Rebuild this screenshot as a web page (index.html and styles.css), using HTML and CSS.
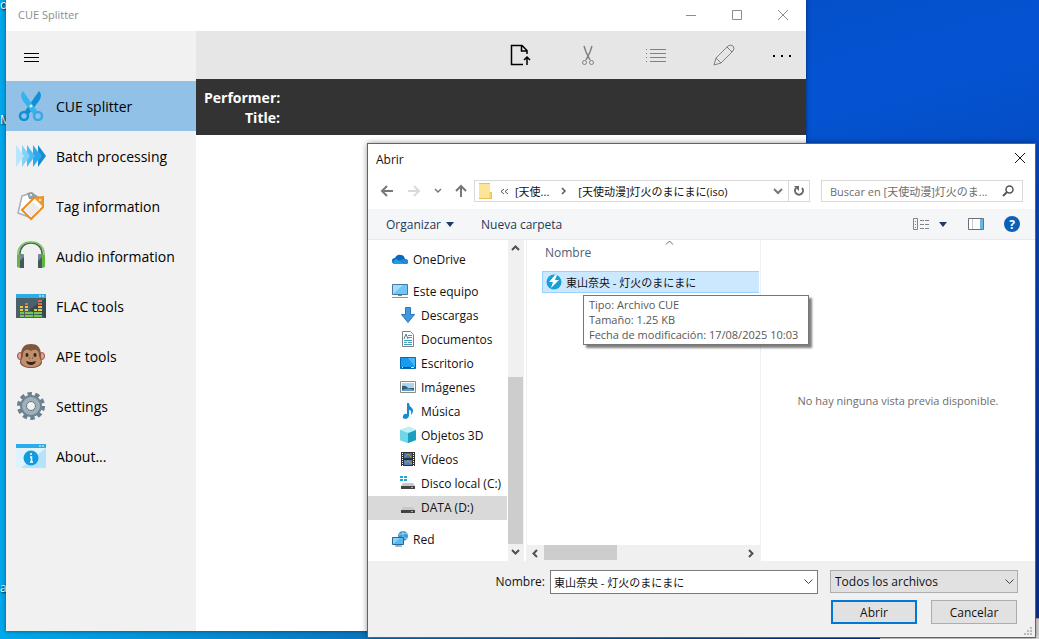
FILE: index.html
```
<!DOCTYPE html>
<html lang="es">
<head>
    <meta charset="UTF-8">
    <meta name="viewport" content="width=device-width, initial-scale=1.0">
    <title>CUE Splitter</title>
    <link rel="stylesheet" href="styles.css">
</head>
<body>
<div class="desktop">
    <span class="desktop-label label-top">o</span>
    <span class="desktop-label label-middle">M</span>
    <span class="desktop-label label-bottom">a</span>
    <div class="desktop-panel"></div>

    <!-- Ventana principal -->
    <main class="app">
        <header class="app-title">
            <span class="app-name">CUE Splitter</span>
            <button class="win-btn" aria-label="Minimizar"><svg width="12" height="12"><path d="M1 5.500h10"/></svg></button>
            <button class="win-btn" aria-label="Maximizar"><svg width="12" height="12"><path d="M1.500.5h9v9h-9z"/></svg></button>
            <button class="win-btn" aria-label="Cerrar"><svg width="12" height="12"><path d="M1 0l10 10M11 0L1 10"/></svg></button>
        </header>
        <div class="app-body">
            <nav class="sidebar">
                <button class="hamburger" aria-label="Menu"><svg width="16" height="12"><path d="M0 1.500h15M0 5.500h15M0 9.500h15" stroke="#000"/></svg></button>
                <a class="nav-item active" href="#">
                    <svg class="nav-icon" viewBox="0 0 30 30">
                        <path d="M23 0c3 3 2 7 0 10L13 23l-4-3z" fill="#0f8fd6"/>
                        <path d="M7 0c-3 3-2 7 0 10l10 13 4-3z" fill="#35b3ea"/>
                        <circle cx="15" cy="15" r="1.500" fill="#cfefff"/>
                        <circle cx="8" cy="25" r="4" fill="none" stroke="#0f8fd6" stroke-width="2.500"/>
                        <circle cx="22" cy="25" r="4" fill="none" stroke="#35a9e6" stroke-width="2.500"/>
                    </svg>
                    <span>CUE splitter</span>
                </a>
                <a class="nav-item" href="#">
                    <svg class="nav-icon" viewBox="0 0 30 30">
                        <path d="M22 4l8 11-8 11z" fill="#168bd2"/>
                        <path d="M22 9l4 6-4 6z" fill="#27a3e6"/>
                        <path d="M17 4l8 11-8 11z" fill="#2ba6ea"/>
                        <path d="M11 4l8 11-8 11z" fill="#4dbbf3"/>
                        <path d="M6 4l8 11-8 11z" fill="#84d1f8"/>
                        <path d="M0 4l8 11-8 11z" fill="#bce6fb"/>
                    </svg>
                    <span>Batch processing</span>
                </a>
                <a class="nav-item" href="#">
                    <svg class="nav-icon" viewBox="0 0 30 30">
                        <path d="M6 5l9-3 7 4-9 20-11-4z" fill="#fff" stroke="#a5afb6" stroke-width="1.500"/>
                        <path d="M11 2l5-1 5 4-1 4-7-1z" fill="#93a0a8"/>
                        <circle cx="15" cy="4" r="1" fill="#fff"/>
                        <path d="M6 19L18 7l9-1v10L15 28z" fill="#fff" stroke="#ef8b1d" stroke-width="2"/>
                        <path d="M18 7l9-1v10z" fill="#f39a2e"/>
                        <path d="M9 19l8-8 7 7-9 8z" fill="#ececec"/>
                        <circle cx="24" cy="9" r="1" fill="#fff"/>
                    </svg>
                    <span>Tag information</span>
                </a>
                <a class="nav-item" href="#">
                    <svg class="nav-icon" viewBox="0 0 30 30">
                        <path d="M4 15C3 6 9 2 15 2s12 4 11 13" fill="none" stroke="#41604f" stroke-width="1.500"/>
                        <path d="M2 15C1 5 8 1 15 1s14 4 13 14" fill="none" stroke="#7fc05e" stroke-width="1.500"/>
                        <path d="M1 14l3-1v14l-3-1zM29 14l-3-1v14l3-1z" fill="#65b640"/>
                        <rect x="4" y="13" width="4" height="14" rx="1" fill="#718893"/>
                        <rect x="22" y="13" width="4" height="14" rx="1" fill="#718893"/>
                        <path d="M4 20l4-4v11H4zM22 20l4-4v11h-4z" fill="#43585f"/>
                    </svg>
                    <span>Audio information</span>
                </a>
                <a class="nav-item" href="#">
                    <svg class="nav-icon" viewBox="0 0 30 30">
                        <path d="M0 3h30v24H0z" fill="#4b6069"/>
                        <path d="M30 7v20L13 19z" fill="#364a52"/>
                        <path d="M0 3h30v4H0z" fill="#2badea"/>
                        <path d="M23 5h2M26 5h2" stroke="#fff"/>
                        <path d="M4 22h4M4 25h4M9 22h4M9 25h4M13 22h4M13 25h4M18 22h4M18 25h4M22 22h4M22 25h4" stroke="#74c950" stroke-width="2"/>
                        <path d="M4 16h3M4 19h3M9 16h3M9 19h3M18 19h3M22 16h4M22 19h4" stroke="#e7c844" stroke-width="2"/>
                        <path d="M9 13h3M22 10h4M22 13h4" stroke="#eb6647" stroke-width="2"/>
                    </svg>
                    <span>FLAC tools</span>
                </a>
                <a class="nav-item" href="#">
                    <svg class="nav-icon" viewBox="0 0 30 30">
                        <ellipse cx="4" cy="15" rx="2.500" ry="3.500" fill="#ef9b9e" stroke="#8b5b42"/>
                        <ellipse cx="26" cy="15" rx="2.500" ry="3.500" fill="#ef9b9e" stroke="#8b5b42"/>
                        <path d="M5 14C5 6 9 3 15 3s10 3 10 11c0 4 1 5 1 7 0 4-6 6-11 6S4 25 4 21c0-2 1-3 1-7z" fill="#80563f"/>
                        <path d="M7 14c0-6 5-6 8-4 3-2 8-2 8 4 0 3 2 4 2 6 0 4-5 6-10 6S5 24 5 20c0-2 2-3 2-6z" fill="#c1906b"/>
                        <ellipse cx="11" cy="14" rx="1.500" ry="2" fill="#30231e"/>
                        <ellipse cx="19" cy="14" rx="1.500" ry="2" fill="#30231e"/>
                        <path d="M13 17h1M16 17h1" stroke="#614234"/>
                        <path d="M10 20q5 2 10 0-1 4-5 4t-5-4z" fill="#35241e"/>
                    </svg>
                    <span>APE tools</span>
                </a>
                <a class="nav-item" href="#">
                    <svg class="nav-icon" viewBox="0 0 30 30">
                        <circle cx="15" cy="15" r="12" fill="none" stroke="#6a808c" stroke-width="4" stroke-dasharray="4.300 3.239"/>
                        <circle cx="15" cy="15" r="8" fill="none" stroke="#6f8692" stroke-width="6"/>
                        <circle cx="15" cy="15" r="7" fill="none" stroke="#9fb0b9" stroke-width="4"/>
                        <circle cx="15" cy="15" r="4.500" fill="#f1f1f1" stroke="#5c7480"/>
                    </svg>
                    <span>Settings</span>
                </a>
                <a class="nav-item" href="#">
                    <svg class="nav-icon" viewBox="0 0 30 30">
                        <path d="M0 3h30v24H0z" fill="#dff3fd"/>
                        <path d="M30 7v20H5z" fill="#b4e4fa"/>
                        <path d="M0 3h30v4H0z" fill="#2badea"/>
                        <path d="M23 5h2M26 5h2" stroke="#fff"/>
                        <circle cx="15" cy="17" r="7.500" fill="#149bdd"/>
                        <circle cx="15" cy="13" r="1" fill="#fff"/>
                        <path d="M14 16h1.500v5M14 21h3" fill="none" stroke="#fff" stroke-width="1.500"/>
                    </svg>
                    <span>About...</span>
                </a>
            </nav>
            <section class="content">
                <div class="toolbar">
                    <button class="tool" aria-label="Abrir archivo"><svg width="22" height="22"><path d="M14 20.500H2.500v-19H13l5 5V10M12.500 2v5H18" stroke="#000" stroke-width="1.500"/><path d="M18 21v-7M15 16l3-3 3 3" stroke="#000" stroke-width="1.500"/></svg></button>
                    <button class="tool" aria-label="Cortar"><svg width="22" height="22"><path d="M7 2l2 6 4 8M15 2l-2 6-4 8" stroke-width="1.500"/><circle cx="7.500" cy="18.500" r="2"/><circle cx="14.500" cy="18.500" r="2"/></svg></button>
                    <button class="tool" aria-label="Lista"><svg width="22" height="22"><path d="M5 5.500h16M5 9.500h16M5 13.500h16M5 17.500h16M1 5.500h1M1 9.500h1M1 13.500h1M1 17.500h1"/></svg></button>
                    <button class="tool" aria-label="Editar"><svg width="22" height="22"><path d="M1 21l2-7L15 2q3-2 5 0t0 5L8 19zM3 14l5 5M14 3l5 5"/></svg></button>
                    <button class="tool more" aria-label="Más"><svg width="20" height="2"><path d="M1 0h2v2H1zM9 0h2v2H9zM17 0h2v2h-2z" fill="#000" stroke="none"/></svg></button>
                </div>
                <dl class="disc-info">
                    <dt>Performer:</dt><dd></dd>
                    <dt>Title:</dt><dd></dd>
                </dl>
            </section>
        </div>
    </main>

    <!-- Cuadro de abrir archivo -->
    <section class="dialog" role="dialog" aria-labelledby="dialogTitle">
        <header class="dialog-title">
            <span id="dialogTitle">Abrir</span>
            <button class="close" aria-label="Cerrar"><svg width="12" height="12"><path d="M1 0l10 10M11 0L1 10" stroke="#111"/></svg></button>
        </header>

        <div class="address-row">
            <div class="history">
                <button aria-label="Atrás"><svg width="14" height="12"><path d="M13 6H2M7 1L2 6l5 5" stroke="#777" stroke-width="2"/></svg></button>
                <button aria-label="Adelante"><svg width="14" height="12"><path d="M1 6h11M7 1l5 5-5 5" stroke="#dadada" stroke-width="2"/></svg></button>
                <button class="recent" aria-label="Recientes"><svg width="8" height="6"><path d="M1 1l3 3 3-3" stroke="#777" stroke-width="1.500"/></svg></button>
                <button aria-label="Subir"><svg width="12" height="14"><path d="M6 13V2M1 7l5-5 5 5" stroke="#777" stroke-width="2"/></svg></button>
            </div>
            <div class="path">
                <svg width="14" height="16"><path d="M1 0h11v9h2v7H1z" fill="#e9c258"/><path d="M1 1h11v14H1z" fill="#fce596"/><path d="M11 10h2v5h-2z" fill="#f9d76f"/></svg>
                <button class="crumb-sep" aria-label="Anteriores"><svg width="9" height="7"><path d="M4 1L1 3.500 4 6M8 1L5 3.500 8 6" stroke="#555"/></svg></button>
                <button class="crumb">[天使...</button>
                <svg class="crumb-arrow" width="5" height="8"><path d="M1 1l3 3-3 3" stroke="#555" stroke-width="1.500"/></svg>
                <button class="crumb current">[天使动漫]灯火のまにまに(iso)</button>
                <button class="path-drop" aria-label="Ubicaciones"><svg width="10" height="7"><path d="M1 1l4 4 4-4" stroke="#777" stroke-width="2"/></svg></button>
                <button class="refresh" aria-label="Actualizar"><svg width="12" height="12"><path d="M9 3a4 4 0 1 1-6 0" stroke="#666" stroke-width="2"/><path d="M1 1h5v5z" fill="#666"/></svg></button>
            </div>
            <div class="search">
                <input type="text" aria-label="Buscar" placeholder="Buscar en [天使动漫]灯火のま...">
                <svg width="12" height="12"><circle cx="7.500" cy="4.500" r="3.500" stroke="#555" stroke-width="1.500"/><path d="M5 7l-4 4" stroke="#555" stroke-width="2"/></svg>
            </div>
        </div>

        <div class="command-bar">
            <button>Organizar <svg width="8" height="5"><path d="M0 0h8L4 5z" fill="#1f3a67"/></svg></button>
            <button>Nueva carpeta</button>
            <div class="view-tools">
                <button aria-label="Vista"><svg width="17" height="13"><path d="M.5.5h4v11h-4zM7 2.500h4M12 2.500h4M7 6.500h4M12 6.500h4M7 10.500h4M12 10.500h4M2 3.500h1M2 6.500h1M2 9.500h1" stroke="#7d858c"/></svg></button>
                <button class="view-drop" aria-label="Más vistas"><svg width="8" height="5"><path d="M0 0h8L4 5z" fill="#1f3a67"/></svg></button>
                <button class="preview-btn" aria-label="Panel de vista previa"><svg width="16" height="12"><path d="M.5.5h15v11H.5z" fill="#fff" stroke="#66717c"/><path d="M4.500 1v10" stroke="#c7cbd0"/><path d="M12 1h3v10h-3z" fill="#69b5e5"/></svg></button>
                <button class="help">?</button>
            </div>
        </div>

        <div class="browser">
            <ul class="tree">
                <li class="top-level"><svg width="16" height="16"><path d="M3 13a3 3 0 0 1 0-6q2-4 6-3 3 0 4 4 3 0 3 3 0 2-2 2z" fill="#0a68bd"/><path d="M2 13q-2-3 2-5l10 5z" fill="#1c9ee8"/><path d="M7 9l6-1q3 0 3 3 0 2-2 2z" fill="#2389da"/></svg>OneDrive</li>
                <li class="top-level spaced"><svg width="16" height="16"><path d="M.5 1.500h15v10H.5z" fill="#70c5f7" stroke="#45799d"/><path d="M1 11V2h10z" fill="#a6dcfa"/><path d="M6 12h4v1H6z" fill="#748795"/><path d="M0 14.500h16" stroke="#8196ab"/></svg>Este equipo</li>
                <li><svg width="16" height="16"><path d="M5.500.5h5v7h4L8 15.500 1.500 7.500h4z" fill="#3f98df" stroke="#2976b9"/></svg>Descargas</li>
                <li><svg width="16" height="16"><path d="M2.500.5h8l3 3v12h-11z" fill="#fff" stroke="#828282"/><path d="M8 4.500h4M8 6.500h4M4 9.500h8M4 11.500h3M8 11.500h4M4 13.500h8" stroke="#409dbd"/><path d="M4 8l2-5 2 5" stroke="#39809c"/></svg>Documentos</li>
                <li><svg width="16" height="16"><path d="M.5 2.500h15v11H.5z" fill="#159cf1" stroke="#0869ad"/><path d="M8 3h7v9z" fill="#4ab6f8"/><path d="M1 12.500h14" stroke="#064d8a"/><path d="M2 12.500h1M11 12.500h3" stroke="#e7f6ff"/></svg>Escritorio</li>
                <li><svg width="16" height="16"><path d="M.5 2.500h15v11H.5z" fill="#fff" stroke="#8a8a8a"/><path d="M2 4h12v8H2z" fill="#a9d5ef"/><path d="M2 7q4-1 6 2h6v3H2z" fill="#365e70"/><path d="M2 11q7-3 12 0v1H2z" fill="#619ecb"/></svg>Imágenes</li>
                <li><svg width="16" height="16"><path d="M7 0h2q0 3 3 5 2 2 0 6l-1 1q1-5-2-5v6q-1 3-4 3-3-1-2-3 1-3 4-2z" fill="#168ccf"/></svg>Música</li>
                <li><svg width="16" height="16"><path d="M0 3l9-3 7 3v10l-8 3-8-3z" fill="#52cbe0"/><path d="M0 3l8 3v10l-8-3z" fill="#6fd6e6"/><path d="M8 6l8-3v10l-8 3z" fill="#1f9fc0"/><path d="M0 3l9-3 7 3-8 3z" fill="#b9f2f6"/></svg>Objetos 3D</li>
                <li><svg width="16" height="16"><path d="M1 1h14v14H1z" fill="#303030"/><path d="M4 2h8v5H4z" fill="#4273a7"/><path d="M4 9h8v5H4z" fill="#547eb3"/><path d="M5 6l3-3 3 3M5 12l3-2 4 3" stroke="#b3a544"/><path d="M2.500 2v13M13.500 2v13" stroke="#fff" stroke-dasharray="1 1"/></svg>Vídeos</li>
                <li><svg width="16" height="16"><path d="M0 1h3v2H0zM4 1h3v2H4zM0 4h3v2H0zM4 4h3v2H4z" fill="#20a8db"/><path d="M3 8h10l2 3H1z" fill="#c5c8c9"/><path d="M1 11h14v3H1z" fill="#444"/><path d="M11 12h2v1h-2z" fill="#3af169"/></svg>Disco local (C:)</li>
                <li class="selected"><svg width="16" height="16"><path d="M3 8h10l2 3H1z" fill="#c5c8c9"/><path d="M1 11h14v3H1z" fill="#444"/><path d="M11 12h2v1h-2z" fill="#3af169"/></svg>DATA (D:)</li>
                <li class="top-level spaced"><svg width="16" height="16"><circle cx="11" cy="5" r="5" fill="#3c98ce"/><path d="M7 4q4-3 8-1M7 7h8M11 0v10" stroke="#9bd4ea"/><path d="M.5 6.500h11v7H.5z" fill="#59baf2" stroke="#1f6999"/><path d="M1 13V7h7z" fill="#8bd4fa"/><path d="M3 15h7M6 13v2" stroke="#527a9b"/></svg>Red</li>
            </ul>
            <div class="v-scroll">
                <button aria-label="Arriba"><svg width="9" height="7"><path d="M1 5l3.500-3.500L8 5" stroke="#505050" stroke-width="2"/></svg></button>
                <div class="v-thumb"></div>
                <button aria-label="Abajo"><svg width="9" height="7"><path d="M1 1l3.500 3.500L8 1" stroke="#505050" stroke-width="2"/></svg></button>
            </div>
            <div class="files">
                <button class="column-head"><svg width="9" height="5"><path d="M1 4.500L4.500 1 8 4.500" stroke="#666"/></svg>Nombre</button>
                <button class="file"><svg width="16" height="16"><circle cx="8" cy="8" r="7.500" fill="#179fd7"/><path d="M9 1L3 8h4l-2 6 8-8H9l2-5z" fill="#fff"/></svg>東山奈央 - 灯火のまにまに</button>
                <div class="tooltip" role="tooltip">Tipo: Archivo CUE<br>Tamaño: 1.25 KB<br>Fecha de modificación: 17/08/2025 10:03</div>
                <div class="h-scroll">
                    <button aria-label="Izquierda"><svg width="7" height="9"><path d="M5 1L1.500 4.500 5 8" stroke="#505050" stroke-width="2"/></svg></button>
                    <div class="h-thumb"></div>
                    <button aria-label="Derecha"><svg width="7" height="9"><path d="M1 1l3.500 3.500L1 8" stroke="#505050" stroke-width="2"/></svg></button>
                </div>
            </div>
            <div class="preview">No hay ninguna vista previa disponible.</div>
        </div>

        <footer class="dialog-footer">
            <div class="name-row">
                <label for="fileName">Nombre:</label>
                <div class="combo">
                    <input type="text" id="fileName" value="東山奈央 - 灯火のまにまに">
                    <button aria-label="Nombres recientes"><svg width="9" height="6"><path d="M.5.5l4 4 4-4" stroke="#444"/></svg></button>
                </div>
                <div class="filter">
                    <select aria-label="Tipo de archivo"><option>Todos los archivos</option></select>
                    <svg width="9" height="6"><path d="M.5.5l4 4 4-4" stroke="#444"/></svg>
                </div>
            </div>
            <div class="actions">
                <button class="btn primary">Abrir</button>
                <button class="btn">Cancelar</button>
            </div>
            <svg class="grip" width="8" height="8"><path d="M6 0h2v2H6zM3 3h2v2H3zM6 3h2v2H6zM0 6h2v2H0zM3 6h2v2H3zM6 6h2v2H6z" fill="#b9b9b9"/></svg>
        </footer>
    </section>
</div>
</body>
</html>
```
FILE: styles.css
```
* {
    box-sizing: border-box;
}

body {
    margin: 0;
    font-family: "Open Sans", "Noto Sans CJK JP", sans-serif;
    font-size: 12px;
    color: #111;
}

button, input, select {
    font: inherit;
    color: inherit;
    margin: 0;
    padding: 0;
    border: none;
    border-radius: 0;
    background: none;
}

button {
    display: flex;
    align-items: center;
    justify-content: center;
    white-space: nowrap;
}

svg {
    display: block;
    flex: none;
    fill: none;
}

.desktop {
    position: relative;
    height: 100vh;
    min-height: 600px;
    overflow: hidden;
    background: linear-gradient(to right, #00a8ec 0%, #0b6fb8 40%, #0a3c88 74%, rgba(0, 0, 0, 0) 74%) bottom / 100% 8px no-repeat,
        linear-gradient(to right, #00a8ec 0%, #00a8ec 10%, rgba(0, 0, 0, 0) 10%),
        linear-gradient(165deg, #0448bd 0%, #0454d2 35%, #07349a 90%);
}

.desktop-label {
    position: absolute;
    left: 0;
    color: #fff;
    line-height: 16px;
    text-shadow: 1px 1px 2px #000;
}

.label-top {
    top: -3px;
}

.label-middle {
    top: 112px;
}

.label-bottom {
    top: 580px;
}

.desktop-panel {
    position: absolute;
    right: 0;
    bottom: 0;
    width: 159px;
    height: 21px;
    background-color: #dcdcdc;
    border-top: 1px solid #b79c86;
}

/* Ventana principal */
.app {
    position: absolute;
    top: 0;
    left: 6px;
    right: 233px;
    bottom: 8px;
    display: flex;
    flex-direction: column;
    background-color: #fff;
    box-shadow: 0 0 4px rgba(0, 0, 0, 0.5);
}

.app-title {
    display: flex;
    height: 31px;
    align-items: stretch;
    color: #8c8c8c;
    font-size: 11px;
}

.app-name {
    flex: 1;
    padding-left: 12px;
    line-height: 30px;
}

.win-btn {
    width: 46px;
    stroke: #8c8c8c;
}

.app-body {
    display: flex;
    flex: 1;
}

.sidebar {
    width: 190px;
    background-color: #f1f1f1;
}

.hamburger {
    width: 50px;
    height: 50px;
    padding: 3px 0 0 2px;
}

.nav-item {
    display: flex;
    align-items: center;
    gap: 10px;
    height: 50px;
    padding-left: 10px;
    font-size: 14px;
    color: #000;
    text-decoration: none;
}

.nav-item.active {
    background-color: #91c1e7;
}

.nav-icon {
    width: 30px;
    height: 30px;
}

.content {
    flex: 1;
}

.toolbar {
    display: flex;
    justify-content: flex-end;
    height: 48px;
    background-color: #e6e6e6;
}

.tool {
    width: 68px;
    stroke: #808080;
}

.tool.more {
    width: 48px;
    padding-top: 2px;
}

.disc-info {
    display: grid;
    grid-template-columns: 76px 1fr;
    grid-auto-rows: 20px;
    margin: 0;
    padding: 9px 8px 7px;
    background-color: #333;
    color: #fff;
    font-size: 14px;
    font-weight: bold;
    line-height: 20px;
}

.disc-info dt {
    text-align: right;
}

.disc-info dd {
    margin: 0;
}

/* Cuadro de dialogo */
.dialog {
    position: absolute;
    top: 143px;
    left: 367px;
    right: 3px;
    bottom: 1px;
    display: flex;
    flex-direction: column;
    background-color: #fff;
    border: 1px solid #606468;
    box-shadow: 0 0 6px rgba(0, 0, 0, 0.4);
}

.dialog-title {
    display: flex;
    justify-content: space-between;
    align-items: center;
    height: 30px;
    padding-left: 8px;
}

.close {
    width: 30px;
    height: 30px;
}

.address-row {
    display: flex;
    gap: 11px;
    padding: 6px 12px 7px 12px;
}

.history {
    display: flex;
    align-items: center;
    justify-content: space-between;
    width: 87px;
    margin-right: -4px;
}

.path, .search {
    display: flex;
    align-items: center;
    height: 22px;
    border: 1px solid #d9d9d9;
    font-size: 11px;
}

.path {
    flex: 1;
    padding-left: 3px;
}

.crumb-sep {
    width: 22px;
    margin-left: 1px;
}

.crumb-arrow {
    margin: 0 12px;
}

.path-drop {
    width: 20px;
    height: 20px;
    margin-left: auto;
}

.refresh {
    width: 21px;
    height: 20px;
    border-left: 1px solid #d9d9d9;
}

.search {
    width: 202px;
    padding: 0 8px;
}

.search input {
    flex: 1;
    min-width: 0;
    outline: none;
}

.search input::placeholder {
    color: #6d6d6d;
    opacity: 1;
}

.command-bar {
    display: flex;
    align-items: center;
    gap: 27px;
    height: 31px;
    padding: 0 15px 0 18px;
    background-color: #f5f6f7;
    border-bottom: 1px solid #e8e9ea;
    color: #1e395b;
}

.command-bar button {
    gap: 5px;
}

.view-tools {
    display: flex;
    align-items: center;
    margin-left: auto;
}

.view-drop {
    margin-left: 9px;
}

.preview-btn {
    margin: 0 20px 0 21px;
}

.command-bar .help {
    width: 16px;
    height: 16px;
    border-radius: 50%;
    background-color: #0b62b5;
    color: #fff;
    font-weight: bold;
}

.browser {
    display: flex;
    flex: 1;
    min-height: 0;
}

.tree {
    width: 139px;
    margin: 0;
    padding: 8px 0 0;
    list-style: none;
    overflow: hidden;
}

.tree li {
    display: flex;
    align-items: center;
    gap: 5px;
    height: 24px;
    padding: 0 0 2px 32px;
    white-space: nowrap;
}

.tree .top-level {
    padding-left: 24px;
}

.tree .spaced {
    margin-top: 8px;
}

.tree .selected {
    background-color: #d9d9d9;
}

.v-scroll {
    display: flex;
    flex-direction: column;
    width: 16px;
    margin: 0 2px 0 1px;
    background-color: #f0f0f0;
}

.v-scroll button {
    width: 15px;
    height: 17px;
}

.v-thumb {
    height: 52%;
    width: 15px;
    margin-top: auto;
    background-color: #cdcdcd;
}

.files {
    position: relative;
    display: flex;
    flex-direction: column;
    width: 235px;
    border-left: 1px solid #f0f0f0;
    border-right: 1px solid #f0f0f0;
}

.column-head {
    position: relative;
    justify-content: flex-start;
    height: 25px;
    padding-left: 18px;
    color: #4c607a;
}

.column-head svg {
    position: absolute;
    top: 0;
    left: 138px;
}

.file {
    justify-content: flex-start;
    gap: 4px;
    height: 22px;
    margin: 6px 1px 0 15px;
    padding-left: 3px;
    background-color: #cce8ff;
    border: 1px solid #99d1ff;
    border-right: none;
    font-size: 11px;
}

.tooltip {
    position: absolute;
    z-index: 1;
    top: 55px;
    left: 56px;
    padding: 1px 10px 2px 5px;
    background-color: #fff;
    border: 1px solid #767676;
    box-shadow: 3px 3px 2px rgba(0, 0, 0, 0.5);
    color: #575757;
    font-size: 11px;
    line-height: 15px;
    white-space: nowrap;
}

.h-scroll {
    display: flex;
    height: 16px;
    margin-top: auto;
    background-color: #f0f0f0;
}

.h-scroll button {
    width: 17px;
    height: 16px;
}

.h-thumb {
    width: 73px;
    height: 15px;
    margin-right: auto;
    background-color: #cdcdcd;
}

.preview {
    display: flex;
    flex: 1;
    align-items: center;
    justify-content: center;
    color: #6d6d6d;
    font-size: 11px;
}

.dialog-footer {
    position: relative;
    height: 76px;
    padding: 9px 17px 0 12px;
    background-color: #f0f0f0;
}

.name-row {
    display: flex;
    align-items: flex-start;
}

.name-row label {
    width: 170px;
    padding-right: 5px;
    line-height: 23px;
    text-align: right;
}

.combo {
    display: flex;
    flex: 1;
    height: 24px;
    margin-right: 12px;
    background-color: #fff;
    border: 1px solid #7a7a7a;
    font-size: 11px;
}

.combo input {
    flex: 1;
    min-width: 0;
    padding-left: 3px;
    outline: none;
}

.combo button {
    width: 17px;
}

.filter {
    position: relative;
    width: 188px;
}

.filter select {
    width: 100%;
    height: 23px;
    padding: 0 20px 0 4px;
    appearance: none;
    background-color: #e1e1e1;
    border: 1px solid #adadad;
}

.filter svg {
    position: absolute;
    top: 9px;
    right: 4px;
    pointer-events: none;
}

.actions {
    display: flex;
    justify-content: flex-end;
    gap: 14px;
    margin: 6px 1px 0 0;
}

.btn {
    width: 86px;
    height: 24px;
    background-color: #e1e1e1;
    border: 1px solid #adadad;
}

.btn.primary {
    border: 2px solid #0078d7;
}

.grip {
    position: absolute;
    right: 3px;
    bottom: 2px;
}
```
